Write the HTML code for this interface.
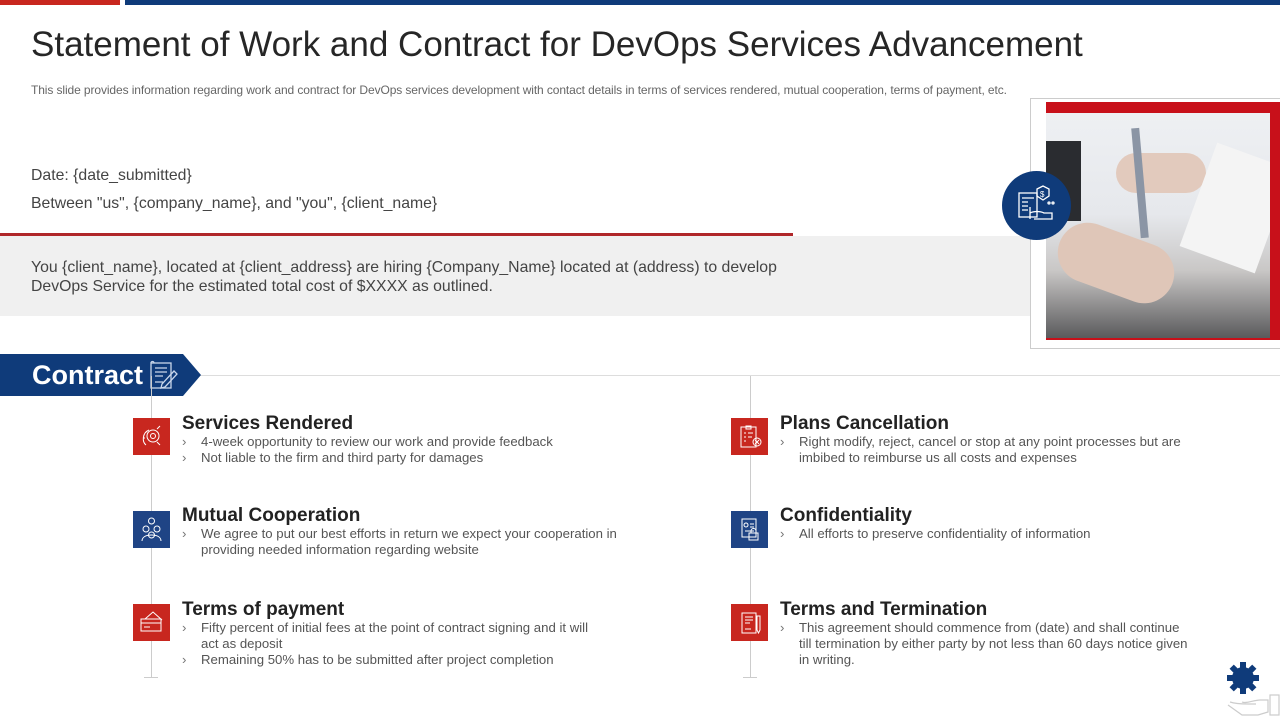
<!DOCTYPE html>
<html><head><meta charset="utf-8"><style>
*{margin:0;padding:0;box-sizing:border-box}
body{width:1280px;height:720px;position:relative;overflow:hidden;background:#fff;font-family:"Liberation Sans",Arial,sans-serif;color:#222}
.a{position:absolute}
h1{position:absolute;left:31px;top:25px;font-size:35px;font-weight:400;color:#262626;white-space:nowrap}
.sub{left:31px;top:83px;font-size:12px;color:#666;white-space:nowrap;letter-spacing:-0.1px}
.t{font-size:15.8px;color:#444;white-space:nowrap}
.box{position:absolute;width:37px;height:37px}
.red{background:#c8271f}.navy{background:#1f4485}
.it h3{font-size:19px;font-weight:700;color:#222;line-height:22px;white-space:nowrap}
.it ul{list-style:none;font-size:13.2px;color:#555;line-height:16px;margin-top:-1px}
.it li{position:relative;padding-left:19px}
.it li:before{content:"›";position:absolute;left:0;top:0;color:#777}
</style></head><body>
<div class="a" style="left:0;top:0;width:120px;height:5px;background:#c8271f"></div>
<div class="a" style="left:125px;top:0;width:1155px;height:5px;background:#0f3b7a"></div>
<h1>Statement of Work and Contract for DevOps Services Advancement</h1>
<div class="a sub">This slide provides information regarding work and contract for DevOps services development with contact details in terms of services rendered, mutual cooperation, terms of payment, etc.</div>
<div class="a t" style="left:31px;top:167px">Date: {date_submitted}</div>
<div class="a t" style="left:31px;top:195px">Between "us", {company_name}, and "you", {client_name}</div>
<div class="a" style="left:0;top:236px;width:1046px;height:80px;background:#f0f0f0"></div>
<div class="a" style="left:0;top:233px;width:793px;height:3px;background:#b0272a"></div>
<div class="a t" style="left:31px;top:258px;line-height:19px;white-space:normal;width:765px">You {client_name}, located at {client_address} are hiring {Company_Name} located at (address) to develop DevOps Service for the estimated total cost of $XXXX as outlined.</div>
<!-- photo frame -->
<div class="a" style="left:1030px;top:98px;width:252px;height:251px;border:1px solid #ccc;background:#fff"></div>
<div class="a" style="left:1046px;top:102px;width:234px;height:238px;background:#c8101a"></div>
<div class="a" style="left:1046px;top:113px;width:224px;height:225px;overflow:hidden;background:linear-gradient(180deg,#eef0f3 0%,#e6e8ec 45%,#c9c7c6 70%,#5a5a5c 100%)">
<div class="a" style="left:0;top:28px;width:35px;height:80px;background:#2a2c30"></div>
<div class="a" style="left:10px;top:120px;width:120px;height:60px;border-radius:40px;background:#dfc6b8;transform:rotate(20deg)"></div>
<div class="a" style="left:70px;top:40px;width:90px;height:40px;border-radius:30px;background:#e2cabd"></div>
<div class="a" style="left:150px;top:40px;width:80px;height:110px;background:#f4f4f4;transform:rotate(20deg)"></div>
<div class="a" style="left:90px;top:15px;width:8px;height:110px;background:#8b95a5;transform:rotate(-5deg)"></div>
</div>
<div class="a" style="left:1002px;top:171px;width:69px;height:69px;border-radius:50%;background:#0f3b7a"></div>
<svg class="a" style="left:1016px;top:185px" width="42" height="42" viewBox="0 0 42 42" fill="none" stroke="#fff" stroke-width="1.3"><rect x="3" y="8" width="18" height="24"/><path d="M6 13h12M6 17h6M6 21h6M6 25h6"/><path d="M21 4l6-3 6 3v7l-6 4-6-4z"/><text x="24" y="12" font-size="8" fill="#fff" stroke="none" font-family="Liberation Sans">$</text><path d="M14 22v12M14 28c4-2 10-2 14 0h8v6H18"/><circle cx="33" cy="18" r="1"/><circle cx="37" cy="18" r="1"/></svg>
<!-- contract banner -->
<div class="a" style="left:0;top:375px;width:1280px;height:1px;background:#ddd"></div>
<svg class="a" style="left:0;top:354px" width="202" height="43"><polygon points="0,0 183,0 201,21 183,42 0,42" fill="#0f3b7a"/></svg>
<div class="a" style="left:32px;top:360px;font-size:27px;font-weight:700;color:#fff">Contract</div>
<svg class="a" style="left:148px;top:360px" width="30" height="30" viewBox="0 0 30 30" fill="none" stroke="#c9d6ea" stroke-width="1.3"><rect x="3" y="3" width="20" height="25"/><path d="M3 3c0-2 3-2 3 0M7 8h12M7 12h12M7 16h8M7 22h8"/><path d="M14 24l12-13 3 3-12 13-4 1z"/></svg>
<div class="a" style="left:151px;top:376px;width:1px;height:302px;background:#ccc"></div>
<div class="a" style="left:750px;top:376px;width:1px;height:302px;background:#ccc"></div>
<div class="a" style="left:144px;top:677px;width:14px;height:1px;background:#ccc"></div>
<div class="a" style="left:743px;top:677px;width:14px;height:1px;background:#ccc"></div>

<div class="box red" style="left:133px;top:418px"></div>
<div class="box navy" style="left:133px;top:511px"></div>
<div class="box red" style="left:133px;top:604px"></div>
<div class="box red" style="left:731px;top:418px"></div>
<div class="box navy" style="left:731px;top:511px"></div>
<div class="box red" style="left:731px;top:604px"></div>
<svg class="a" style="left:133px;top:418px" width="37" height="37" fill="none" stroke="#fff" stroke-width="1"><circle cx="20" cy="18" r="6"/><circle cx="20" cy="18" r="2.5"/><path d="M13 27c-4-3-4-12 3-15M24 11l3-3M27 27l-3-3M12 20h-2"/></svg>
<svg class="a" style="left:133px;top:511px" width="37" height="37" fill="none" stroke="#fff" stroke-width="1"><circle cx="18.5" cy="10" r="3"/><circle cx="13" cy="18" r="3"/><circle cx="24" cy="18" r="3"/><circle cx="18.5" cy="24" r="3"/><path d="M9 30c0-4 4-6 9.5-6s9.5 2 9.5 6"/></svg>
<svg class="a" style="left:133px;top:604px" width="37" height="37" fill="none" stroke="#fff" stroke-width="1"><rect x="8" y="15" width="20" height="12"/><path d="M8 19h20M11 23h6M12 15l8-7 9 8"/></svg>
<svg class="a" style="left:731px;top:418px" width="37" height="37" fill="none" stroke="#fff" stroke-width="1"><rect x="10" y="9" width="15" height="20"/><path d="M15 8h5v3h-5zM13 15h2M17 15h5M13 19h2M17 19h4M13 23h2"/><circle cx="26" cy="24" r="4"/><path d="M24 22l4 4M28 22l-4 4"/></svg>
<svg class="a" style="left:731px;top:511px" width="37" height="37" fill="none" stroke="#fff" stroke-width="1"><rect x="11" y="8" width="14" height="18"/><circle cx="15" cy="14" r="2"/><path d="M19 13h4M19 16h4M14 20h9"/><rect x="18" y="22" width="9" height="7"/><path d="M20 22v-2a2.5 2.5 0 0 1 5 0v2"/></svg>
<svg class="a" style="left:731px;top:604px" width="37" height="37" fill="none" stroke="#fff" stroke-width="1"><rect x="11" y="9" width="14" height="20"/><path d="M14 13h8M14 16h8M14 19h5M14 25h6"/><path d="M26 12v14l1.5 3 1.5-3V12z"/></svg>

<div class="a it" style="left:182px;top:413px;width:450px"><h3>Services Rendered</h3><ul><li>4-week opportunity to review our work and provide feedback</li><li>Not liable to the firm and third party for damages</li></ul></div>
<div class="a it" style="left:182px;top:505px;width:445px"><h3>Mutual Cooperation</h3><ul><li>We agree to put our best efforts in return we expect your cooperation in providing needed information regarding website</li></ul></div>
<div class="a it" style="left:182px;top:599px;width:420px"><h3>Terms of payment</h3><ul><li>Fifty percent of initial fees at the point of contract signing and it will act as deposit</li><li>Remaining 50% has to be submitted after project completion</li></ul></div>
<div class="a it" style="left:780px;top:413px;width:412px"><h3>Plans Cancellation</h3><ul><li>Right modify, reject, cancel or stop at any point processes but are imbibed to reimburse us all costs and expenses</li></ul></div>
<div class="a it" style="left:780px;top:505px;width:420px"><h3>Confidentiality</h3><ul><li>All efforts to preserve confidentiality of information</li></ul></div>
<div class="a it" style="left:780px;top:599px;width:414px"><h3>Terms and Termination</h3><ul><li>This agreement should commence from (date) and shall continue till termination by either party by not less than 60 days notice given in writing.</li></ul></div>

<svg class="a" style="left:1226px;top:660px" width="54" height="60" viewBox="0 0 54 60"><g transform="translate(17,18)" fill="#0f3b7a"><circle r="11"/><g id="tt"><rect x="-3" y="-16" width="6" height="7"/></g><use href="#tt" transform="rotate(45)"/><use href="#tt" transform="rotate(90)"/><use href="#tt" transform="rotate(135)"/><use href="#tt" transform="rotate(180)"/><use href="#tt" transform="rotate(225)"/><use href="#tt" transform="rotate(270)"/><use href="#tt" transform="rotate(315)"/></g><path d="M4 42c6 2 14 2 18 2h8M2 45l14 10h16l10-3V40h-8c-6 0-14 4-18 2" fill="none" stroke="#ccc" stroke-width="1.2"/><rect x="44" y="35" width="9" height="20" fill="none" stroke="#ccc" stroke-width="1.2"/></svg>
</body></html>
